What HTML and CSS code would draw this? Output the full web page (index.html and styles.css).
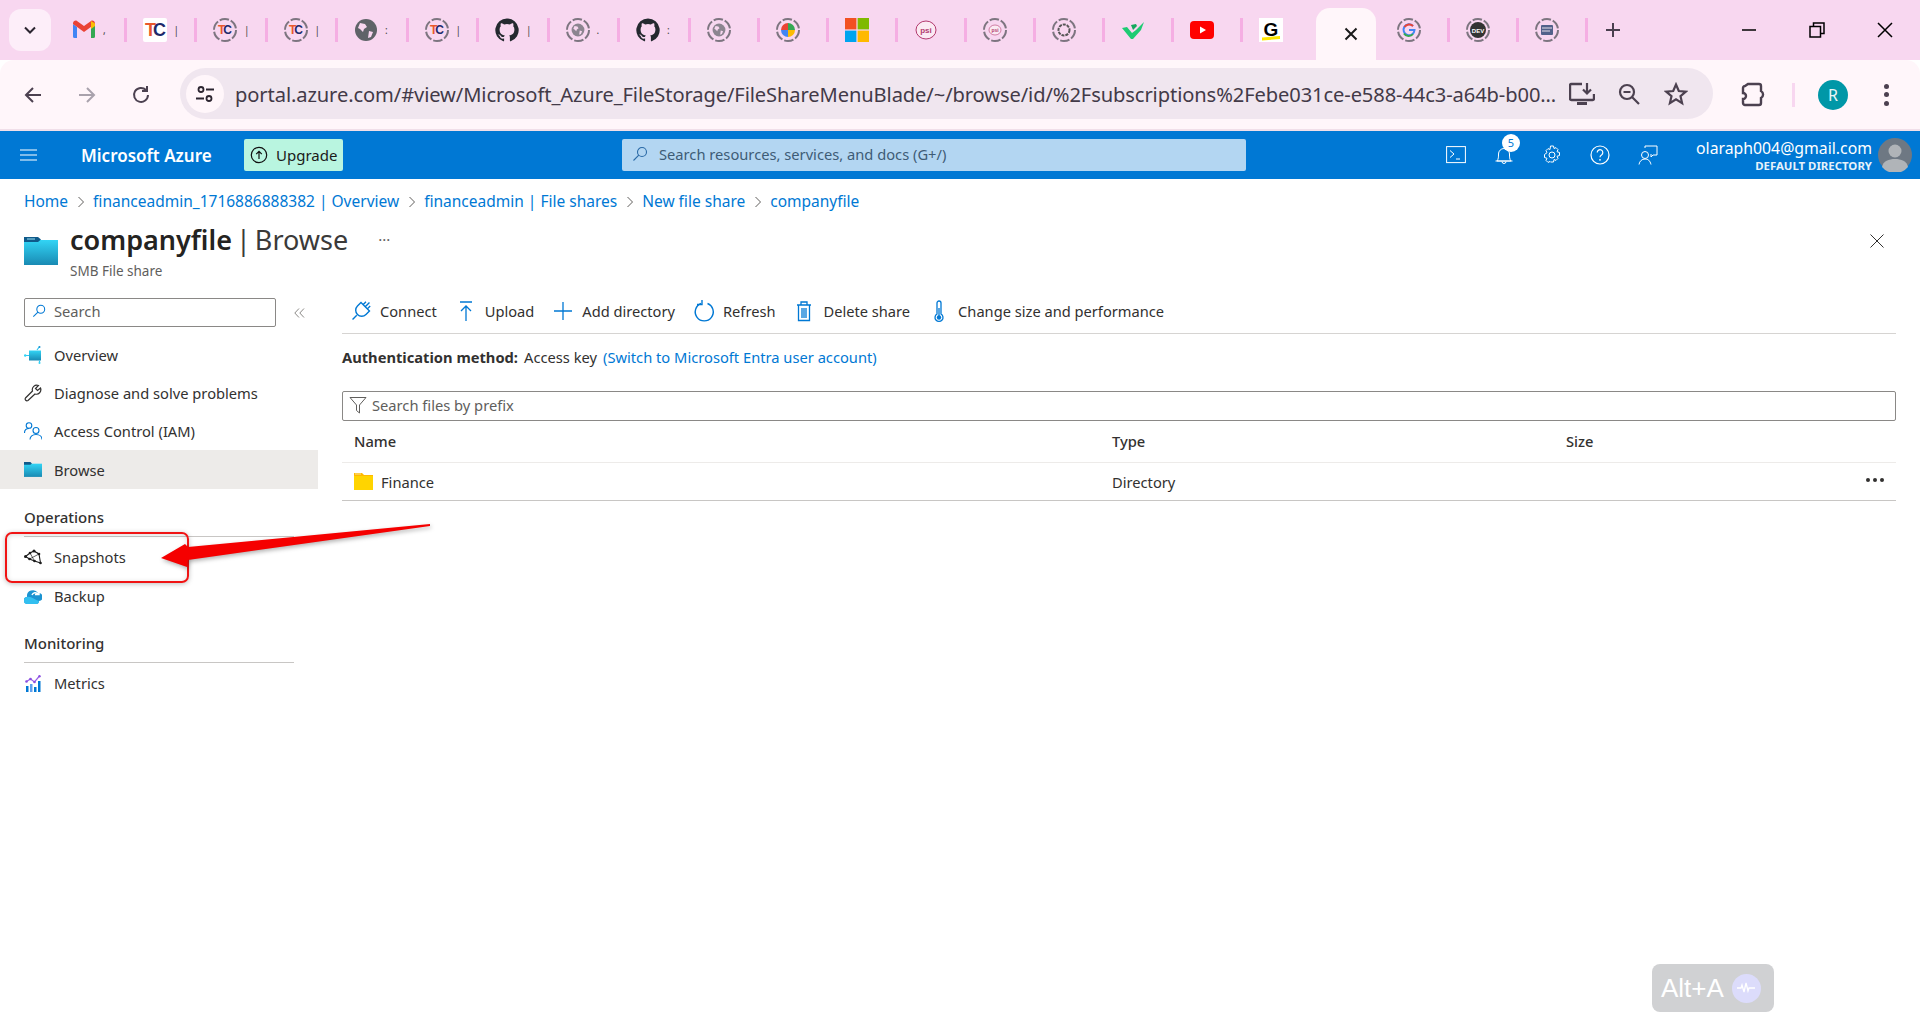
FILE: index.html
```html
<!DOCTYPE html>
<html lang="en">
<head>
<meta charset="utf-8">
<title>companyfile | Browse</title>
<link rel="stylesheet" href="styles.css">
</head>
<body>
<svg class="defs" width="0" height="0" aria-hidden="true">
  <defs>
    <linearGradient id="fs" x1="0" y1="0" x2="0" y2="1"><stop offset="0" stop-color="#32d4f5"/><stop offset="1" stop-color="#198ab3"/></linearGradient>
  </defs>
  <symbol id="ring" viewBox="0 0 24 24"><circle cx="12" cy="12" r="11" fill="none" stroke="#7d7580" stroke-width="2" stroke-dasharray="9.5 2"/></symbol>
  <symbol id="github" viewBox="0 0 24 24"><path fill="#24292f" d="M12 .5a11.7 11.7 0 0 0-3.7 22.8c.6.1.8-.2.8-.6v-2.1c-3.3.7-4-1.6-4-1.6-.5-1.4-1.3-1.7-1.3-1.7-1.1-.7.1-.7.1-.7 1.2.1 1.8 1.2 1.8 1.2 1.1 1.8 2.8 1.3 3.4 1 .1-.8.4-1.3.8-1.6-2.6-.3-5.3-1.3-5.3-5.8 0-1.3.4-2.3 1.2-3.1-.1-.3-.5-1.500.1-3.100 0 0 1-.3 3.200 1.200a11 11 0 0 1 5.800 0c2.200-1.500 3.200-1.200 3.200-1.200.6 1.600.2 2.800.1 3.100.8.800 1.200 1.800 1.200 3.100 0 4.500-2.700 5.500-5.300 5.800.4.400.8 1.100.8 2.200v3.300c0 .3.2.7.8.6A11.700 11.700 0 0 0 12 .5z"/></symbol>
  <symbol id="globe" viewBox="0 0 24 24"><circle cx="12" cy="12" r="11" fill="#5f6368"/><path fill="#f8d7f0" d="M6 5l5 1 2 3-3 2-1 3-3-3-2-1zM15 13l4 1-2 5-3 1z"/></symbol>
</svg>

<header class="tabstrip">
  <div class="tab-list-btn"><svg width="14" height="14" viewBox="0 0 14 14"><path d="M2 4.500l5 5 5-5" fill="none" stroke="#2b2530" stroke-width="2"/></svg></div>
  <div class="tab">
    <svg class="fav" viewBox="0 0 24 24"><path fill="#4285f4" d="M1 20V6l4 3v11H2.500A1.500 1.500 0 0 1 1 18.500z"/><path fill="#34a853" d="M23 20V6l-4 3v11h2.500a1.500 1.500 0 0 0 1.500-1.500z"/><path fill="#ea4335" d="M1 6l11 8 11-8v-.500C23 3 20.500 2 19 3l-7 5-7-5C3.500 2 1 3 1 5.500z"/><path fill="#fbbc04" d="M19 3l4 2.500V8l-4 3z"/></svg>
    <span class="sliver">,</span>
  </div>
  <div class="tab"><svg class="fav" viewBox="0 0 24 24"><rect width="24" height="24" rx="2" fill="#fff"/><text x="2" y="18" class="tc"><tspan class="tc-t">T</tspan><tspan class="tc-c" dx="-3">C</tspan></text></svg><span class="sliver">|</span></div>
  <div class="tab"><svg class="fav" viewBox="0 0 24 24"><use href="#ring" width="24" height="24"/><text x="5" y="16" class="tc tc-sm"><tspan class="tc-t">T</tspan><tspan class="tc-c" dx="-2">C</tspan></text></svg><span class="sliver">|</span></div>
  <div class="tab"><svg class="fav" viewBox="0 0 24 24"><use href="#ring" width="24" height="24"/><text x="5" y="16" class="tc tc-sm"><tspan class="tc-t">T</tspan><tspan class="tc-c" dx="-2">C</tspan></text></svg><span class="sliver">|</span></div>
  <div class="tab"><svg class="fav" viewBox="0 0 24 24"><use href="#globe" width="24" height="24"/></svg><span class="sliver">:</span></div>
  <div class="tab"><svg class="fav" viewBox="0 0 24 24"><use href="#ring" width="24" height="24"/><text x="5" y="16" class="tc tc-sm"><tspan class="tc-t">T</tspan><tspan class="tc-c" dx="-2">C</tspan></text></svg><span class="sliver">|</span></div>
  <div class="tab"><svg class="fav" viewBox="0 0 24 24"><use href="#github" width="24" height="24"/></svg><span class="sliver">|</span></div>
  <div class="tab"><svg class="fav" viewBox="0 0 24 24"><use href="#ring" width="24" height="24"/><use href="#globe" x="5" y="5" width="14" height="14" opacity=".7"/></svg><span class="sliver">.</span></div>
  <div class="tab"><svg class="fav" viewBox="0 0 24 24"><use href="#github" width="24" height="24"/></svg><span class="sliver">:</span></div>
  <div class="tab"><svg class="fav" viewBox="0 0 24 24"><use href="#ring" width="24" height="24"/><use href="#globe" x="5" y="5" width="14" height="14" opacity=".7"/></svg></div>
  <div class="tab"><svg class="fav" viewBox="0 0 24 24"><use href="#ring" width="24" height="24"/><path fill="#ea4335" d="M12 12V5a7 7 0 0 0-7 7z"/><path fill="#34a853" d="M12 12V5a7 7 0 0 1 7 7z"/><path fill="#4285f4" d="M12 12H5a7 7 0 0 0 7 7z"/><path fill="#fbbc04" d="M12 12h7a7 7 0 0 1-7 7z"/></svg></div>
  <div class="tab"><svg class="fav" viewBox="0 0 24 24"><rect width="11.400" height="11.400" fill="#f25022"/><rect x="12.600" width="11.400" height="11.400" fill="#7fba00"/><rect y="12.600" width="11.400" height="11.400" fill="#00a4ef"/><rect x="12.600" y="12.600" width="11.400" height="11.400" fill="#ffb900"/></svg></div>
  <div class="tab"><svg class="fav" viewBox="0 0 24 24"><ellipse cx="12" cy="12" rx="10" ry="9" fill="#fbeaf3" stroke="#b23a6e" stroke-width="1"/><text x="12" y="15" class="psi">psi</text></svg></div>
  <div class="tab"><svg class="fav" viewBox="0 0 24 24"><use href="#ring" width="24" height="24"/><ellipse cx="12" cy="12" rx="6" ry="5" fill="#fbeaf3" stroke="#b23a6e" stroke-width=".6"/><text x="12" y="14" class="psi psi-sm">psi</text></svg></div>
  <div class="tab"><svg class="fav" viewBox="0 0 24 24"><use href="#ring" width="24" height="24"/><circle cx="12" cy="12" r="5.500" fill="none" stroke="#555" stroke-width="2" stroke-dasharray="3 1"/></svg></div>
  <div class="tab"><svg class="fav" viewBox="0 0 24 24"><path fill="#1ecb73" d="M1 10l5-1 5 6 4-3 8-8-3 8-8 9h-2z"/><path fill="#16a85d" d="M10 7l5-1 1 2-4 4z"/></svg></div>
  <div class="tab"><svg class="fav" viewBox="0 0 24 24"><rect y="3" width="24" height="18" rx="4" fill="#f00"/><path fill="#fff" d="M10 8.500l6 3.500-6 3.500z"/></svg></div>
  <div class="tab"><svg class="fav" viewBox="0 0 24 24"><rect width="24" height="24" fill="#fff"/><text x="12" y="18" class="g-logo">G</text><path fill="#ffe600" d="M3 19.500l18-1.500v3L3 22.500z"/></svg></div>
  <div class="tab tab-active"><svg width="16" height="16" viewBox="0 0 16 16"><path d="M2.500 2.500l11 11M13.500 2.500l-11 11" stroke="#1a1a1a" stroke-width="2"/></svg></div>
  <div class="tab tab-after"><svg class="fav" viewBox="0 0 24 24"><use href="#ring" width="24" height="24"/><path fill="none" stroke="#4285f4" stroke-width="2" d="M12 12h5.500a5.500 5.500 0 1 1-1.500-4"/><path fill="none" stroke="#ea4335" stroke-width="2" d="M16 8a5.500 5.500 0 0 0-8.500 1"/><path fill="none" stroke="#34a853" stroke-width="2" d="M7 15.500a5.500 5.500 0 0 0 9 .5"/></svg></div>
  <div class="tab tab-after"><svg class="fav" viewBox="0 0 24 24"><use href="#ring" width="24" height="24"/><circle cx="12" cy="12" r="8" fill="#333"/><text x="12" y="14.500" class="dev">DEV</text></svg></div>
  <div class="tab tab-after"><svg class="fav" viewBox="0 0 24 24"><use href="#ring" width="24" height="24"/><rect x="6" y="7" width="12" height="10" rx="1" fill="#52618a"/><path d="M7 10h10M7 13h8" stroke="#e6e0ea"/></svg></div>
  <div class="new-tab"><svg width="16" height="16" viewBox="0 0 16 16"><path d="M8 1v14M1 8h14" stroke="#4a3f4f" stroke-width="2"/></svg></div>
  <div class="win-controls">
    <svg width="16" height="16" viewBox="0 0 16 16"><path d="M1 8h14" stroke="#000" stroke-width="1.500"/></svg>
    <svg width="16" height="16" viewBox="0 0 16 16"><path d="M1 4.500h10.500V15H1zM4.500 4V1H15v10.500h-3" fill="none" stroke="#000" stroke-width="1.500"/></svg>
    <svg width="16" height="16" viewBox="0 0 16 16"><path d="M1 1l14 14M15 1L1 15" stroke="#000" stroke-width="1.500"/></svg>
  </div>
</header>

<nav class="browser-bar">
  <button class="nav-btn"><svg width="20" height="20" viewBox="0 0 20 20"><path d="M18 10H3M10 3l-7 7 7 7" fill="none" stroke="#4c4150" stroke-width="2"/></svg></button>
  <button class="nav-btn"><svg width="20" height="20" viewBox="0 0 20 20"><path d="M2 10h15M10 3l7 7-7 7" fill="none" stroke="#a9a2ac" stroke-width="2"/></svg></button>
  <button class="nav-btn"><svg width="20" height="20" viewBox="0 0 20 20"><path d="M17 10a7 7 0 1 1-2-5M16 1v5h-5" fill="none" stroke="#4c4150" stroke-width="2"/></svg></button>
  <div class="omnibox">
    <span class="site-chip"><svg width="20" height="20" viewBox="0 0 20 20"><circle cx="6" cy="5.500" r="2.500" fill="none" stroke="#2c2530" stroke-width="1.800"/><path d="M11 5.500h8M1 14.500h8" stroke="#2c2530" stroke-width="1.800"/><circle cx="14" cy="14.500" r="2.500" fill="none" stroke="#2c2530" stroke-width="1.800"/></svg></span>
    <span class="url">portal.azure.com/#view/Microsoft_Azure_FileStorage/FileShareMenuBlade/~/browse/id/%2Fsubscriptions%2Febe031ce-e588-44c3-a64b-b00...</span>
    <span class="omni-icons">
      <svg width="26" height="24" viewBox="0 0 26 24"><path d="M13 2H2.500A1.500 1.500 0 0 0 1 3.500v13A1.500 1.500 0 0 0 2.500 18h21a1.500 1.500 0 0 0 1.500-1.500V12" fill="none" stroke="#4c4150" stroke-width="2.400"/><path d="M8 21.500h10" stroke="#4c4150" stroke-width="3"/><path d="M18 1v10M14 7.500l4 4 4-4" fill="none" stroke="#4c4150" stroke-width="2.200"/></svg>
      <svg width="22" height="22" viewBox="0 0 22 22"><circle cx="9" cy="9" r="7" fill="none" stroke="#4c4150" stroke-width="2.200"/><path d="M14 14l7 7M5.500 9h7" stroke="#4c4150" stroke-width="2.200"/></svg>
      <svg class="star" width="24" height="24" viewBox="0 0 24 24"><path d="M12 2.500l2.800 6.500 7 .6-5.300 4.600 1.600 6.900-6.100-3.700-6.100 3.700 1.600-6.900L2.200 9.600l7-.6z" fill="none" stroke="#4c4150" stroke-width="2.200"/></svg>
    </span>
  </div>
  <span class="bar-ext"><svg width="26" height="26" viewBox="0 0 26 26"><path d="M7 2h11a2 2 0 0 1 2 2v5a4 4 0 0 1 0 7v5a2 2 0 0 1-2 2H4a2 2 0 0 1-2-2v-4a3 3 0 0 0 3-3 3 3 0 0 0-3-3V6a2 2 0 0 1 2-2z" fill="none" stroke="#4c4150" stroke-width="2.400"/></svg></span>
  <span class="bar-sep"></span>
  <span class="profile">R</span>
  <span class="bar-menu"><i></i><i></i><i></i></span>
</nav>

<section class="azure-bar">
  <svg class="hamburger" width="17" height="12" viewBox="0 0 17 12"><path d="M0 1h17M0 6h17M0 11h17" stroke="#fff" stroke-width="1.200"/></svg>
  <span class="brand">Microsoft Azure</span>
  <span class="upgrade"><svg width="18" height="18" viewBox="0 0 18 18"><circle cx="9" cy="9" r="7.700" fill="none" stroke="#111" stroke-width="1.200"/><path d="M9 13V5.500M6.200 8.200L9 5.400l2.800 2.800" fill="none" stroke="#111" stroke-width="1.200"/></svg><span>Upgrade</span></span>
  <div class="global-search">
    <svg width="16" height="16" viewBox="0 0 16 16"><circle cx="10" cy="6" r="4.500" fill="none" stroke="#2a6aa6" stroke-width="1.100"/><path d="M6.800 9.200L1.500 14.500" stroke="#2a6aa6" stroke-width="1.100"/></svg>
    <span>Search resources, services, and docs (G+/)</span>
  </div>
  <div class="top-icons">
    <svg width="20" height="18" viewBox="0 0 20 18"><rect x=".6" y=".6" width="18.800" height="16" fill="none" stroke="#fff" stroke-width="1"/><path d="M4 4.500l4 3.500-4 3.500M10 13h4" fill="none" stroke="#fff"/></svg>
    <span class="bell"><svg width="20" height="22" viewBox="0 0 20 22"><path d="M3 17c1.500-2 1.500-4 1.500-7a5.500 5.500 0 0 1 11 0c0 3 0 5 1.500 7zM1.500 17h17M8 17.500a2 2 0 0 0 4 0" fill="none" stroke="#fff"/></svg><b class="bell-count">5</b></span>
    <svg width="20" height="20" viewBox="0 0 20 20"><path d="M8.500 1h3l.5 2.500 2-.9 2 2-1 2.100 2.500.8v3l-2.500.8 1 2.100-2 2-2-.9-.5 2.500h-3L8 16.500l-2 .9-2-2 1-2.100-2.500-.8v-3L5 7.700 4 5.600l2-2 2 .9z" fill="none" stroke="#fff"/><circle cx="10" cy="10" r="3" fill="none" stroke="#fff"/></svg>
    <svg width="20" height="20" viewBox="0 0 20 20"><circle cx="10" cy="10" r="9" fill="none" stroke="#fff" stroke-width="1.200"/><path d="M7.200 7.500a2.800 2.800 0 1 1 4.300 2.400c-1 .6-1.500 1.100-1.500 2.300" fill="none" stroke="#fff" stroke-width="1.200"/><circle cx="10" cy="14.800" r=".9" fill="#fff"/></svg>
    <svg width="20" height="20" viewBox="0 0 20 20"><path d="M7 3V1h12v9h-4l-2 2v-3" fill="none" stroke="#fff"/><circle cx="7" cy="10" r="3.500" fill="none" stroke="#fff"/><path d="M1 19.500c.5-3.500 3-5.500 6-5.500s5 1.500 6 5.500" fill="none" stroke="#fff"/></svg>
  </div>
  <div class="account"><span class="email">olaraph004@gmail.com</span><span class="tenant">DEFAULT DIRECTORY</span></div>
  <svg class="avatar" width="34" height="34" viewBox="0 0 34 34"><circle cx="17" cy="17" r="17" fill="#6e7883"/><circle cx="17" cy="13" r="6.500" fill="#b0b4b8"/><path d="M4 29c1-6 7-8 13-8s12 2 13 8a17 17 0 0 1-26 0z" fill="#b0b4b8"/></svg>
</section>

<nav class="breadcrumb">
  <a>Home</a><svg class="crumb-sep" viewBox="0 0 8 12"><path d="M1.500 1l5 5-5 5" fill="none" stroke="#605e5c"/></svg>
  <a>financeadmin_1716886888382 | Overview</a><svg class="crumb-sep" viewBox="0 0 8 12"><path d="M1.500 1l5 5-5 5" fill="none" stroke="#605e5c"/></svg>
  <a>financeadmin | File shares</a><svg class="crumb-sep" viewBox="0 0 8 12"><path d="M1.500 1l5 5-5 5" fill="none" stroke="#605e5c"/></svg>
  <a>New file share</a><svg class="crumb-sep" viewBox="0 0 8 12"><path d="M1.500 1l5 5-5 5" fill="none" stroke="#605e5c"/></svg>
  <a>companyfile</a>
</nav>

<div class="blade-head">
  <svg class="blade-icon" width="34" height="28" viewBox="0 0 34 28"><rect y="3" width="34" height="25" fill="url(#fs)"/><path d="M0 0h14l3 2.500-3 2.500H0z" fill="#0f5a8a"/><path d="M3 2h8" stroke="#9fe3f5"/></svg>
  <div class="blade-titles">
    <h1 class="blade-title"><strong>companyfile</strong><span class="blade-section"> | Browse</span></h1>
    <p class="blade-sub">SMB File share</p>
  </div>
  <span class="blade-more">···</span>
  <svg class="blade-close" width="14" height="14" viewBox="0 0 14 14"><path d="M.5.500l13 13M13.500.500l-13 13" stroke="#323130"/></svg>
</div>

<div class="blade-body">
  <aside class="side">
    <div class="side-search-row">
      <div class="side-search"><svg width="14" height="14" viewBox="0 0 16 16"><circle cx="10" cy="6" r="4.500" fill="none" stroke="#0078d4" stroke-width="1.200"/><path d="M6.800 9.200L1.500 14.500" stroke="#0078d4" stroke-width="1.200"/></svg><span>Search</span></div>
      <svg class="collapse" width="11" height="10" viewBox="0 0 11 10"><path d="M5 .500L.8 5 5 9.500M10 .500L5.800 5 10 9.500" fill="none" stroke="#8a8886"/></svg>
    </div>
    <a class="side-item"><svg width="18" height="18" viewBox="0 0 18 18"><rect x="5" y="4.500" width="12" height="10" fill="url(#fs)"/><path d="M0 9.500h5M13 4l2.500-3.500M15.500 14.500v2.500" stroke="#32c8f5" stroke-width="1.200"/><circle cx="1.200" cy="9.500" r="1.200" fill="#32d4f5"/><circle cx="15.500" cy="1" r="1" fill="#1b93d1"/><circle cx="15.500" cy="17" r="1" fill="#32d4f5"/></svg>Overview</a>
    <a class="side-item"><svg width="18" height="18" viewBox="0 0 18 18"><path d="M1.500 14a1.800 1.800 0 0 0 2.500 2.500l7-6.500a4.500 4.500 0 0 0 5.500-6L13.500 6.500 11.500 4.500 14.500 1.500a4.500 4.500 0 0 0-6 5.500z" fill="none" stroke="#323130" stroke-width="1.200"/></svg>Diagnose and solve problems</a>
    <a class="side-item"><svg width="18" height="18" viewBox="0 0 18 18"><circle cx="5" cy="3.500" r="2.800" fill="none" stroke="#0078d4" stroke-width="1.100"/><circle cx="12" cy="8.500" r="3" fill="none" stroke="#0078d4" stroke-width="1.100"/><path d="M.5 11c0-3 2-4.500 4.500-4.500M6 17.500c0-3 2.500-5 6-5s6 2 6 5" fill="none" stroke="#0078d4" stroke-width="1.100"/></svg>Access Control (IAM)</a>
    <a class="side-item side-item-on"><svg width="18" height="15" viewBox="0 0 34 28"><rect y="3" width="34" height="25" fill="url(#fs)"/><path d="M0 0h12l3 2.500-3 2.500H0z" fill="#0f5a8a"/></svg>Browse</a>
    <h2 class="side-head">Operations</h2>
    <a class="side-item"><svg width="18" height="16" viewBox="0 0 18 16"><path d="M1.500 7.500L6 4l4-2 5 3 1.500 9-6-2-5-2z" fill="none" stroke="#1c1c1c" stroke-width="1.100"/><path d="M6 4l4.500 8M10 2l5 3M5.500 10L15 5" fill="none" stroke="#1c1c1c" stroke-width=".7"/><g fill="#1c1c1c"><circle cx="1.500" cy="7.500" r="1.500"/><circle cx="6" cy="4" r="1.300"/><circle cx="10" cy="2" r="1.500"/><circle cx="15" cy="5" r="1.300"/><circle cx="16.500" cy="14" r="1.300"/><circle cx="10.500" cy="12" r="1.300"/><circle cx="5.500" cy="10" r="1.300"/></g></svg>Snapshots</a>
    <a class="side-item"><svg width="18" height="16" viewBox="0 0 18 16"><path d="M3.500 16a3.500 3.500 0 0 1-.5-7A6 6 0 0 1 14 5a4 4 0 0 1 1 8 3 3 0 0 1-2 3z" fill="#1b93d1"/><path d="M3.500 16a3.500 3.500 0 0 1-.5-7c4-1 8 3 12 4a3 3 0 0 1-2 3z" fill="#32bff0"/><path d="M8 7a3.500 3.500 0 0 1 6-1M15 2.500v4h-4" fill="none" stroke="#fff" stroke-width="1.400"/></svg>Backup</a>
    <h2 class="side-head">Monitoring</h2>
    <a class="side-item"><svg width="16" height="17" viewBox="0 0 16 17"><path d="M1.500 6.500l4-2.500 4 3 5-6" fill="none" stroke="#9a5fe8" stroke-width="1.200"/><g fill="#8a4fe0"><circle cx="1.500" cy="6.500" r="1.300"/><circle cx="5.500" cy="4" r="1.300"/><circle cx="9.500" cy="7" r="1.300"/><circle cx="14.500" cy="1.200" r="1.200"/></g><rect x="1" y="11" width="2.500" height="6" fill="#0078d4"/><rect x="5" y="9" width="2.500" height="8" fill="#5ea0ef"/><rect x="9" y="12" width="2.500" height="5" fill="#0078d4"/><rect x="13" y="6" width="2.500" height="11" fill="#0078d4"/></svg>Metrics</a>
  </aside>

  <main class="main">
    <div class="cmd-bar">
      <span class="cmd"><svg width="24" height="24" viewBox="0 0 24 24"><g transform="rotate(45 12 12)" fill="none" stroke="#0078d4" stroke-width="1.400"><path d="M12 0v6M12 18v6M6 6h12v5a6 6 0 0 1-12 0zM9 2v4M15 2v4"/></g></svg>Connect</span>
      <span class="cmd"><svg width="24" height="24" viewBox="0 0 24 24"><path d="M6 3h12M12 22V7M7 12l5-5 5 5" fill="none" stroke="#0078d4" stroke-width="1.300"/></svg>Upload</span>
      <span class="cmd"><svg width="24" height="24" viewBox="0 0 24 24"><path d="M12 3v18M3 12h18" stroke="#0078d4" stroke-width="1.300"/></svg>Add directory</span>
      <span class="cmd"><svg width="24" height="24" viewBox="0 0 24 24"><path d="M9 4.500a9 9 0 1 0 6.500 0M10 1v4.500H5" fill="none" stroke="#0078d4" stroke-width="1.400"/></svg>Refresh</span>
      <span class="cmd"><svg width="24" height="24" viewBox="0 0 24 24"><path d="M5 6h14M9 6V3h6v3M6.500 6v15.500h11V6M10 9v10M12 9v10M14 9v10" fill="none" stroke="#0078d4" stroke-width="1.300"/></svg>Delete share</span>
      <span class="cmd"><svg width="24" height="24" viewBox="0 0 24 24"><path d="M10 15V4a2 2 0 0 1 4 0v11a4 4 0 1 1-4 0z" fill="none" stroke="#0078d4" stroke-width="1.300"/><circle cx="12" cy="18.500" r="2.200" fill="#0078d4"/><path d="M12 9v9" stroke="#0078d4" stroke-width="1.300"/></svg>Change size and performance</span>
    </div>
    <p class="auth"><b>Authentication method:</b> <span>Access key</span> <a>(Switch to Microsoft Entra user account)</a></p>
    <div class="filter"><svg width="18" height="18" viewBox="0 0 18 18"><path d="M1 1.500h16l-6.500 7.500v8l-3-2.500V9z" fill="none" stroke="#605e5c" stroke-width="1"/></svg><span>Search files by prefix</span></div>
    <div class="grid-row grid-head"><span>Name</span><span>Type</span><span>Size</span></div>
    <div class="grid-row grid-item">
      <span class="file-name"><svg width="19" height="17" viewBox="0 0 19 17"><path d="M0 0h8l2 2h9v15H0z" fill="#ffb900"/><rect y="3" width="19" height="14" fill="#ffd400"/><path d="M1 1h6" stroke="#f8e29a"/></svg>Finance</span>
      <span>Directory</span><span></span>
      <span class="row-more"><i></i><i></i><i></i></span>
    </div>
  </main>
</div>

<div class="callout"></div>
<svg class="arrow" width="300" height="70" viewBox="0 0 300 70"><path class="arrow-shape" d="M1 43L25 29 28 32 270 9 270 11 28 45 27 52z"/></svg>
<div class="alt-badge"><span>Alt+A</span><i class="alt-dot"><svg width="20" height="12" viewBox="0 0 20 12"><path d="M1 6h4l1-3 2 7 2-9 2 8 1-3h6" fill="none" stroke="#fff" stroke-width="1.300"/></svg></i></div>
</body>
</html>
```
FILE: styles.css
```css
* { box-sizing: border-box; }
html, body { margin: 0; height: 100%; }
body {
  position: relative;
  width: 1920px;
  height: 1020px;
  overflow: hidden;
  background: #fff;
  font-family: "Noto Sans", "Open Sans", sans-serif;
  font-size: 14.7px;
  color: #323130;
}
.defs { position: absolute; }
a { color: #0078d4; text-decoration: none; }
svg { flex: none; display: block; }
.tc { font: 700 18px "Liberation Sans", sans-serif; }
.tc-sm { font-size: 12px; }
.tc-t { fill: #e8582c; }
.tc-c { fill: #1d2a6b; }
.psi { font: 700 8px "Liberation Sans", sans-serif; fill: #b23a6e; text-anchor: middle; }
.psi-sm { font-size: 5px; }
.g-logo { font: 700 19px "Liberation Sans", sans-serif; fill: #000; text-anchor: middle; }
.dev { font: 700 6px "Liberation Sans", sans-serif; fill: #fff; text-anchor: middle; }

/* tab strip */
.tabstrip { display: flex; align-items: center; height: 60px; background: #f8d7f0; padding-left: 9px; position: relative; }
.tab-list-btn { width: 42px; height: 42px; margin-right: 5px; border-radius: 12px; background: #fdeef9; display: flex; align-items: center; justify-content: center; margin-top: -1px; }
.tab { position: relative; width: 70.5px; height: 24px; display: flex; align-items: center; padding-left: 16px; border-right: 3px solid #f5aee3; flex: none; }
.tab:nth-child(n+11) { width: 69px; }
.tab:nth-child(n+19) { border-right: 0; }
.tab-after { border-right: 3px solid #f5aee3 !important; width: 69px; }
.fav { width: 24px; height: 24px; }
.sliver { position: absolute; left: 47px; top: 2px; font-size: 10px; color: #444; line-height: 20px; }
.tab-active { width: 60px !important; height: 52px; padding-left: 27px; margin: 8px 5px 0 4px; border: 0; border-radius: 14px 14px 0 0; background: #fff6fa; flex: none; }
.new-tab { margin-left: 17px; }
.win-controls { display: flex; gap: 52px; margin-left: auto; padding-right: 27px; }

/* browser bar */
.browser-bar { display: flex; align-items: center; height: 71px; padding-left: 6px; background: #fff6fa; border-bottom: 2px solid #f1dfe9; border-radius: 14px 14px 0 0; }
.nav-btn { width: 54px; height: 40px; border: 0; padding: 0; background: none; display: flex; align-items: center; justify-content: center; }
.omnibox { display: flex; align-items: center; width: 1533px; height: 51px; margin-left: 12px; padding-left: 6px; background: #f0e6ef; border-radius: 26px; margin-top: -2px; }
.site-chip { width: 38px; height: 38px; border-radius: 50%; background: #fff6fa; display: flex; align-items: center; justify-content: center; }
.url { margin-left: 11px; width: 1321px; white-space: nowrap; font-size: 20.12px; color: #433a48; letter-spacing: -.1px; }
.omni-icons { display: flex; align-items: center; gap: 23px; margin-left: 13px; }
.star { margin-left: 1px; }
.bar-ext { margin-left: 28px; }
.bar-sep { width: 3px; height: 24px; background: #f8d7f0; margin-left: 25px; }
.profile { width: 30px; height: 30px; border-radius: 50%; background: #0097a7; color: #e8f6f7; font-size: 16px; display: flex; align-items: center; justify-content: center; margin-left: 23px; }
.bar-menu { display: flex; flex-direction: column; gap: 3.500px; margin-left: 36px; }
.bar-menu i { width: 5px; height: 5px; border-radius: 50%; background: #4c4150; }

/* azure bar */
.azure-bar { display: flex; align-items: center; height: 48px; background: #0078d4; padding-left: 20px; color: #fff; }
.brand { margin-left: 44px; font-weight: 600; font-size: 17px; width: 163px; white-space: nowrap; }
.upgrade { display: flex; align-items: center; gap: 8px; width: 99px; height: 32px; padding-left: 6px; background: #b9f5e0; border-radius: 2px; color: #1b1a19; font-size: 15px; white-space: nowrap; }
.global-search { display: flex; align-items: center; gap: 11px; width: 624px; height: 32px; margin-left: 279px; padding: 0 0 2px 10px; background: #b3d6f2; border-radius: 2px; color: #3e5c76; font-size: 14.7px; }
.top-icons { display: flex; align-items: center; gap: 28px; margin-left: 200px; }
.bell { position: relative; display: block; }
.bell-count { position: absolute; left: 8px; top: -10px; width: 18px; height: 18px; border-radius: 50%; background: #fff; color: #0078d4; font-weight: 400; font-size: 11px; line-height: 18px; text-align: center; }
.account { display: flex; flex-direction: column; align-items: flex-end; width: 190px; margin-left: 24px; padding-top: 2px; line-height: 1; }
.email { font-size: 15.8px; white-space: nowrap; }
.tenant { font-size: 11.4px; font-weight: 700; margin-top: 3px; white-space: nowrap; color: #e6f2fb; }
.avatar { margin-left: 6px; }

/* breadcrumb + head */
.breadcrumb { display: flex; align-items: center; gap: 6.5px; height: 43px; padding: 1px 0 0 24px; font-size: 15.5px; }
.crumb-sep { width: 8px; height: 12px; margin: 1px 2px 0; }
.blade-head { display: flex; align-items: flex-start; height: 68px; padding-left: 24px; }
.blade-icon { margin-top: 15px; }
.blade-titles { margin-left: 12px; }
.blade-title { margin: -1px 0 0; font-size: 27px; font-weight: 400; line-height: 38px; color: #242321; white-space: nowrap; }
.blade-title strong { font-weight: 600; }
.blade-section { word-spacing: -3px; color: #3b3a39; }
.blade-sub { margin: 3px 0 0; font-size: 13.500px; line-height: 18px; color: #605e5c; }
.blade-more { margin-left: 30px; margin-top: 7px; font-size: 15px; color: #605e5c; }
.blade-close { margin-left: auto; margin-right: 36px; margin-top: 12px; }

/* body */
.blade-body { display: flex; }
.side { width: 318px; flex: none; }
.side-search-row { display: flex; align-items: flex-start; height: 46px; padding: 8px 0 0 24px; }
.side-search { display: flex; align-items: center; gap: 8px; width: 252px; height: 29px; padding: 0 0 3px 7px; border: 1px solid #8a8886; border-radius: 2px; color: #605e5c; }
.collapse { margin: 10px 0 0 18px; }
.side-item { display: flex; align-items: center; gap: 12px; height: 38px; padding-left: 24px; color: #323130; }
.side-item svg { width: 18px; }
.side-item-on { height: 39px; background: #edebe9; }
.side-head { display: flex; align-items: center; height: 48px; margin: 0 24px; padding-top: 8px; border-bottom: 1px solid #c8c6c4; font-size: 15px; font-weight: 500; color: #323130; }
.side-head + .side-item { height: 40px; }

.main { flex: 1; padding: 0 24px; }
.cmd-bar { display: flex; gap: 17px; height: 44px; padding: 0 0 2px 7px; border-bottom: 1px solid #d6d4d2; align-items: center; font-size: 14.65px; }
.cmd { display: flex; align-items: center; gap: 7px; white-space: nowrap; color: #323130; }
.auth { display: flex; gap: 6px; height: 46px; margin: 0 0 11px; align-items: center; color: #323130; }
.auth b { font-weight: 700; }
.filter { display: flex; align-items: center; gap: 5px; height: 30px; padding: 0 0 2px 6px; border: 1px solid #8a8886; border-radius: 2px; color: #605e5c; }
.grid-row { display: grid; grid-template-columns: 758px 454px 1fr; padding-left: 12px; align-items: center; position: relative; border-bottom: 1px solid #d6d4d2; }
.grid-head { height: 42px; padding-bottom: 2px; font-weight: 500; border-bottom-color: #edebe9; }
.grid-item { height: 38px; border-bottom-color: #c8c6c4; }
.file-name { display: flex; align-items: center; gap: 8px; }
.row-more { position: absolute; right: 12px; top: 15px; display: flex; gap: 3px; }
.row-more i { width: 4px; height: 4px; border-radius: 50%; background: #323130; }

/* annotations on the shot */
.callout { position: absolute; left: 5px; top: 532px; width: 184px; height: 51px; border: 2px solid #f01414; border-radius: 7px; box-shadow: 0 1px 5px rgba(0,0,0,.25), inset 0 1px 5px rgba(0,0,0,.15); }
.arrow { position: absolute; left: 160px; top: 515px; filter: drop-shadow(1px 2px 2px rgba(0,0,0,.3)); }
.arrow-shape { fill: #f50000; }
.alt-badge { position: absolute; left: 1652px; top: 964px; display: flex; align-items: center; gap: 8px; width: 122px; height: 48px; padding-left: 9px; border-radius: 8px; background: #d0d1d3; color: #fff; font: 26px "Liberation Sans", sans-serif; }
.alt-dot { width: 29px; height: 29px; border-radius: 50%; background: #dcdcfb; display: flex; align-items: center; justify-content: center; font-style: normal; }
```
